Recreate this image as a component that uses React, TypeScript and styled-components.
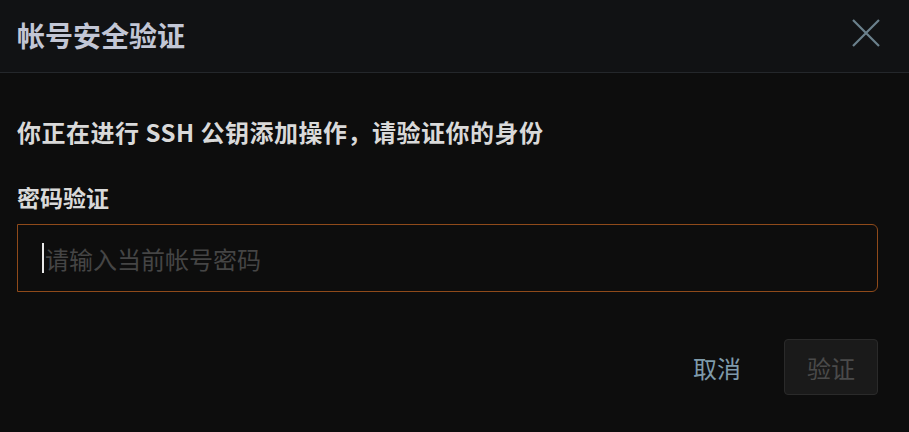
import { type FC } from 'react';
import styled, { createGlobalStyle } from 'styled-components';

const GlobalStyle = createGlobalStyle`
  html, body {
    margin: 0;
    padding: 0;
    background: #0d0d0d;
  }
  body {
    font-family: 'Noto Sans CJK SC', 'Noto Sans', sans-serif;
  }
`;

const Dialog = styled.div`
  width: 909px;
  height: 432px;
  background: #0d0d0d;
  display: flex;
  flex-direction: column;
`;

const Header = styled.div`
  height: 72px;
  display: flex;
  align-items: center;
  justify-content: space-between;
  padding: 0 29px 0 17px;
  background: #111214;
  border-bottom: 1px solid #24272b;
`;

const Title = styled.h2`
  margin: 0;
  font-size: 28px;
  font-weight: 700;
  line-height: 36px;
  color: #c2c6d5;
  margin-top: -3px;
`;

const CloseButton = styled.button`
  display: flex;
  padding: 0;
  border: none;
  background: transparent;
  cursor: pointer;
  margin-top: -6px;
`;

const Body = styled.div`
  padding: 43px 31px 0 17px;
  display: flex;
  flex-direction: column;
`;

const Message = styled.p`
  margin: 0;
  font-size: 24px;
  font-weight: 700;
  line-height: 32px;
  letter-spacing: 0.5px;
  color: #d9d9d9;
`;

const Label = styled.label`
  margin-top: 33px;
  font-size: 23px;
  font-weight: 700;
  line-height: 32px;
  color: #d9d9d9;
`;

const Field = styled.div`
  position: relative;
  margin-top: 11px;
  display: flex;
`;

const Input = styled.input`
  flex: 1;
  height: 68px;
  box-sizing: border-box;
  padding: 0 27px;
  background: #0d0d0d;
  border: 1px solid #8f4a1a;
  border-radius: 0 6px 6px 0;
  font-family: inherit;
  font-size: 24px;
  color: #e0e0e0;
  caret-color: transparent;
  outline: none;

  &::placeholder {
    color: #454545;
  }
`;

const Caret = styled.span`
  position: absolute;
  left: 25px;
  top: 19px;
  width: 2px;
  height: 30px;
  background: #e8e8e8;
  pointer-events: none;
`;

const Footer = styled.div`
  margin-top: 47px;
  display: flex;
  justify-content: flex-end;
  gap: 22px;
`;

const Button = styled.button<{ $variant: 'text' | 'primary' }>`
  height: 56px;
  box-sizing: border-box;
  font-family: inherit;
  font-size: 24px;
  border-radius: 4px;
  cursor: pointer;
  padding: ${(p) => (p.$variant === 'text' ? '0 20px' : '0 22px')};
  background: ${(p) => (p.$variant === 'text' ? 'transparent' : '#1a1a1a')};
  border: 1px solid ${(p) => (p.$variant === 'text' ? 'transparent' : '#2a2a2a')};
  color: ${(p) => (p.$variant === 'text' ? '#7f9bab' : '#4a4a4a')};

  &:disabled {
    cursor: not-allowed;
  }
`;

const CloseIcon: FC = () => (
  <svg width="28" height="28" viewBox="0 0 28 28">
    <path d="M1 1 L27 27 M27 1 L1 27" stroke="#6b808c" strokeWidth="2.2" fill="none" />
  </svg>
);

export default function App() {
  return (
    <>
      <GlobalStyle />
      <Dialog>
        <Header>
          <Title>帐号安全验证</Title>
          <CloseButton aria-label="关闭">
            <CloseIcon />
          </CloseButton>
        </Header>
        <Body>
          <Message>你正在进行 SSH 公钥添加操作，请验证你的身份</Message>
          <Label htmlFor="pwd">密码验证</Label>
          <Field>
            <Input id="pwd" type="password" placeholder="请输入当前帐号密码" autoFocus />
            <Caret />
          </Field>
          <Footer>
            <Button $variant="text">取消</Button>
            <Button $variant="primary" disabled>
              验证
            </Button>
          </Footer>
        </Body>
      </Dialog>
    </>
  );
}
